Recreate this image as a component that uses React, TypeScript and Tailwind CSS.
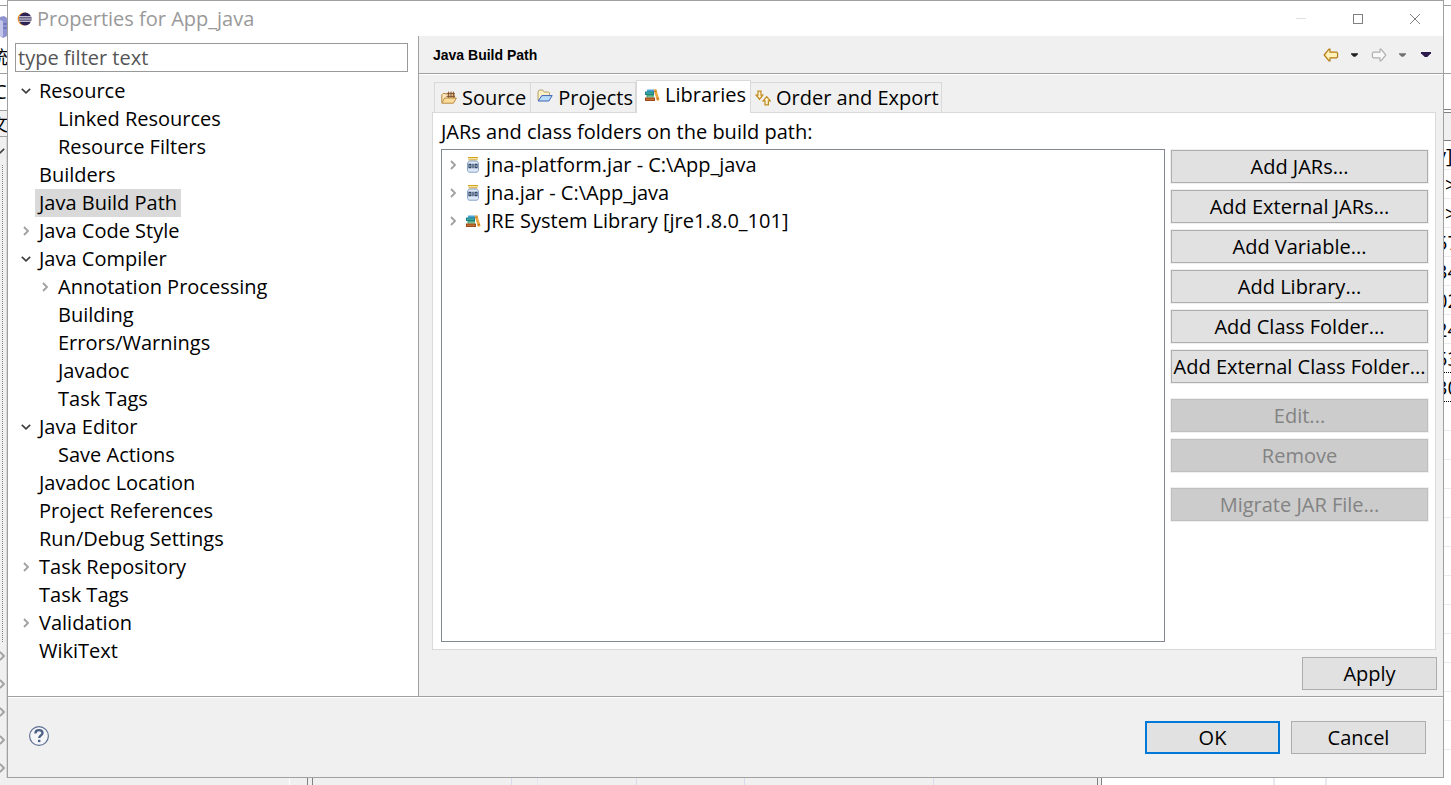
import { useState, type ReactNode } from "react";
import clsx from "clsx";

type TreeNode = { label: string; depth: 0 | 1; state?: "open" | "closed" };

const TREE: TreeNode[] = [
  { label: "Resource", depth: 0, state: "open" },
  { label: "Linked Resources", depth: 1 },
  { label: "Resource Filters", depth: 1 },
  { label: "Builders", depth: 0 },
  { label: "Java Build Path", depth: 0 },
  { label: "Java Code Style", depth: 0, state: "closed" },
  { label: "Java Compiler", depth: 0, state: "open" },
  { label: "Annotation Processing", depth: 1, state: "closed" },
  { label: "Building", depth: 1 },
  { label: "Errors/Warnings", depth: 1 },
  { label: "Javadoc", depth: 1 },
  { label: "Task Tags", depth: 1 },
  { label: "Java Editor", depth: 0, state: "open" },
  { label: "Save Actions", depth: 1 },
  { label: "Javadoc Location", depth: 0 },
  { label: "Project References", depth: 0 },
  { label: "Run/Debug Settings", depth: 0 },
  { label: "Task Repository", depth: 0, state: "closed" },
  { label: "Task Tags", depth: 0 },
  { label: "Validation", depth: 0, state: "closed" },
  { label: "WikiText", depth: 0 },
];

function Chevron({ state }: { state?: "open" | "closed" }) {
  return (
    <svg viewBox="0 0 12 12" className="h-3 w-3 shrink-0" fill="none" aria-hidden="true">
      {state === "open" && <path d="M1.8 3.8 6 7.8l4.2-4" stroke="#404040" strokeWidth="1.7" />}
      {state === "closed" && <path d="m4 2 4 4-4 4" stroke="#a0a0a0" strokeWidth="1.8" />}
    </svg>
  );
}

function EclipseIcon() {
  return (
    <svg viewBox="0 0 16 16" className="h-4 w-4 shrink-0" aria-hidden="true">
      <circle cx="7" cy="8" r="6.4" fill="#f7941e" />
      <circle cx="8.2" cy="8" r="6.4" fill="#2c2255" />
      <path d="M2 5.8h12.4M1.8 8h12.8M2 10.2h12.4" stroke="#fff" strokeWidth="1" />
    </svg>
  );
}

function BooksIcon() {
  return (
    <svg viewBox="0 0 16 16" className="h-4 w-4 shrink-0" aria-hidden="true">
      <path d="M3 2.5h7V5H3z" fill="#4aa3d8" />
      <path d="M1 4.5h9V8H1z" fill="#1f7f86" />
      <path d="M2 5.6h7v1H2z" fill="#4fc0b0" />
      <path d="M2.5 8H10v2.5H2.5z" fill="#3a9a6b" />
      <path d="M3.5 8.7H10v1H3.5z" fill="#8fd0a0" />
      <path d="M1 10.5h10V14H1z" fill="#9c4a1c" />
      <path d="M2 11.7h8v1.1H2z" fill="#d07b3a" />
      <path d="m9.6 2.8 2.6-.9 3.4 11.2-2.6.9z" fill="#eda640" />
      <path d="m10.4 4.6 2.2-.7M12.6 12l2.3-.7" stroke="#b96a14" strokeWidth="1" />
    </svg>
  );
}

function SourceIcon() {
  return (
    <svg viewBox="0 0 16 16" className="h-4 w-4 shrink-0" aria-hidden="true">
      <path d="M.8 12.5V4.8L2 3.5h3l1 1.2h7.5v4" fill="#f9e6bd" stroke="#b98a45" />
      <path d="M6.2 2.2h7v5.6h-7z" fill="#f3d3a5" />
      <path d="M5.5 3.6h8.4M5.5 6.4h8.4M7.6 1.6v6.4M10 1.6v6.4M12.4 1.6v6.4" stroke="#75492a" strokeWidth=".9" />
      <path d="M.8 13.2 3.6 8h11.8l-3 5.2z" fill="#fbdc98" stroke="#b98a45" />
    </svg>
  );
}

function ProjectsIcon() {
  return (
    <svg viewBox="0 0 16 16" className="mb-1 h-4 w-4 shrink-0" aria-hidden="true">
      <path d="M1 12.2V4l1.3-2h3.4l1.4 2h4.6l.8 1v3" fill="#fbefc4" stroke="#b4a06a" />
      <path d="M1.2 13 4.8 7.6h10.4L11.8 13z" fill="#b9dcf8" stroke="#3d62b8" />
    </svg>
  );
}

function OrderIcon() {
  return (
    <svg viewBox="0 0 16 16" className="h-4 w-4 shrink-0" fill="#fdf3cf" stroke="#c08a1e" strokeWidth="1.2" aria-hidden="true">
      <path d="M3 1.2h3v4h1.8L4.5 9.2 1.2 5.2H3z" />
      <path d="M10 14.8h3.4v-4h1.9l-3.6-4.2-3.6 4.2H10z" />
    </svg>
  );
}

function JarIcon() {
  return (
    <svg viewBox="0 0 16 16" className="h-4 w-4 shrink-0" aria-hidden="true">
      <path d="M3 0h10v1.4H3z" fill="#d6a520" />
      <path d="M3.5 1.4h9v1h-9z" fill="#f6e6a4" />
      <path d="M3.5 2.4h9v1h-9z" fill="#cf9c1c" />
      <path d="M4.2 4h7.6l1.7 2v7.6l-1.2 1.6H3.7l-1.2-1.6V6z" fill="#dce7f5" stroke="#8aa5ca" />
      <path d="M4 7.3h1.9v3.4H4zM10.1 7.3H12v3.4h-1.9z" fill="#f5f8fd" stroke="#1f3558" strokeWidth="1.1" />
      <path d="M8 6.8v4.4" stroke="#1f3558" strokeWidth="1.2" />
    </svg>
  );
}

function DownCaret({ className }: { className: string }) {
  return (
    <svg viewBox="0 0 8 4" className={clsx("shrink-0", className)} fill="currentColor" aria-hidden="true">
      <path d="M0 0h8v1L5 4H3L0 1z" />
    </svg>
  );
}

function ArrowIcon({ forward = false }: { forward?: boolean }) {
  return (
    <svg
      viewBox="0 0 16 14"
      className={clsx("h-3.5 w-4 shrink-0", forward && "-scale-x-100")}
      fill={forward ? "#f8f8f8" : "#fff1b8"}
      stroke={forward ? "#b0b0b0" : "#b57a14"}
      strokeWidth="1.2"
      strokeLinejoin="round"
      aria-hidden="true"
    >
      <path d="M1.2 7 6 1.2h1v3h6.6l1 1v3.6l-1 1H7v3H6z" />
    </svg>
  );
}

function PushButton({ children, disabled, primary, className }: { children: ReactNode; disabled?: boolean; primary?: boolean; className?: string }) {
  return (
    <button
      type="button"
      disabled={disabled}
      className={clsx(
        "flex h-[33px] items-center justify-center whitespace-nowrap leading-none shadow-[0_0_0_1px_#f0f0f0]",
        disabled && "border border-[#bfbfbf] bg-[#cccccc] text-[#838383]",
        primary && "border-2 border-[#0078d7] bg-[#e1e1e1]",
        !disabled && !primary && "border border-[#adadad] bg-[#e1e1e1]",
        className,
      )}
    >
      {children}
    </button>
  );
}

const TABS = [
  { label: "Source", icon: <SourceIcon />, padding: "pl-1.5 pr-1" },
  { label: "Projects", icon: <ProjectsIcon />, padding: "pl-1.5 pr-0.5" },
  { label: "Libraries", icon: <BooksIcon />, padding: "pl-[7px] pr-1" },
  { label: "Order and Export", icon: <OrderIcon />, padding: "pl-1 pr-0.5" },
];

const LIBRARIES = [
  { label: "jna-platform.jar - C:\\App_java", icon: <JarIcon /> },
  { label: "jna.jar - C:\\App_java", icon: <JarIcon /> },
  { label: "JRE System Library [jre1.8.0_101]", icon: <BooksIcon /> },
];

const GRID_ROWS = ["y]", ">", ">", "57", "34", "02", "24", "53", "30", "", "", "", "", "", "", "", "", "", "", "", ""];

function LeftBackground() {
  return (
    <div className="flex w-[7px] shrink-0 flex-col overflow-hidden bg-white">
      <div className="h-1.5 border-b border-[#a0a0a0]" />
      <div className="flex h-[68px] flex-col justify-between border-b border-[#a0a0a0] pt-2.5">
        <svg viewBox="0 0 7 22" className="h-[22px] w-[7px]" aria-hidden="true">
          <path d="M0 1 4 0l3 2v18l-4 2-3-2z" fill="#8f93cf" />
          <path d="M0 4 3 5v16l-3-1z" fill="#c3c6ea" />
          <path d="M3 8h4M3 12h4" stroke="#5b60a8" />
        </svg>
        <span className="-ml-2.5 flex h-8 items-center text-lg">统</span>
      </div>
      <div className="flex h-[37px] items-center border-b border-[#a0a0a0]">
        <span className="-ml-1.5">C</span>
      </div>
      <div className="flex h-[26px] items-center border-b border-[#a0a0a0] bg-[#f0f0f0]">
        <span className="-ml-2.5 text-lg">文</span>
      </div>
      <div className="flex flex-1 flex-col border-r border-[#d8d8d8] bg-[#f0f0f0]">
        <div className="-ml-1.5 flex h-7 w-3 items-center">
          <Chevron state="open" />
        </div>
        <div className="ml-0.5 flex-1 border-l border-dotted border-[#808080]" />
        <div className="-mb-1">
          {[0, 1, 2, 3, 4].map((n) => (
            <div key={n} className="-ml-1 flex h-7 w-3 items-center">
              <Chevron state="closed" />
            </div>
          ))}
        </div>
      </div>
    </div>
  );
}

function RightBackground() {
  return (
    <div className="flex w-[7px] shrink-0 flex-col overflow-hidden bg-white">
      <div className="h-1.5 border-b border-[#a0a0a0]" />
      <div className="h-[68px] border-b border-[#a0a0a0]" />
      <div className="h-9 border-b border-[#808080]" />
      <div className="mt-0.5 h-[29px] shrink-0 border-y border-[#808080] bg-[#f0f0f0]" />
      <div className="flex-1">
        {GRID_ROWS.map((text, i) => (
          <div
            key={i}
            className={clsx(
              "flex h-[29px] items-center border-b pt-0.5",
              i === 7 || i === 8 ? "border-dotted border-black" : "border-[#ececec]",
            )}
          >
            <span className={text.length > 1 ? "-ml-2" : "ml-px"}>{text}</span>
          </div>
        ))}
      </div>
    </div>
  );
}

function BottomBackground() {
  return (
    <div className="flex h-[7px] shrink-0 bg-[#f0f0f0]">
      <div className="w-[290px] border-r border-white" />
      <div className="w-[18px] border-r border-[#808080]" />
      <div className="w-[5px] border-r border-[#808080]" />
      <div className="w-[199px] border-r border-[#d9dcee]" />
      <div className="w-[26px] border-r border-[#e3e5f0]" />
      <div className="w-[99px] border-r border-[#d9dcee]" />
      <div className="w-[108px] border-r border-[#d9dcee]" />
      <div className="w-[189px] border-r border-[#d9dcee]" />
      <div className="flex-1" />
      <div className="w-[5px] border-x border-[#808080]" />
      <div className="w-[173px] border-r-2 border-[#e8e9f2] bg-white" />
      <div className="w-[52px] border-r-2 border-[#e8e9f2] bg-white" />
      <div className="w-[124px] bg-white" />
    </div>
  );
}

function TitleBar() {
  return (
    <header className="flex h-[35px] shrink-0 items-center bg-white pl-[9px]">
      <EclipseIcon />
      <h1 className="ml-1 flex-1 text-[#999999]">Properties for App_java</h1>
      <button type="button" aria-label="Minimize" className="flex h-full w-14 items-center justify-center">
        <span className="h-px w-2.5 bg-[#e0e0e0]" />
      </button>
      <button type="button" aria-label="Maximize" className="flex h-full w-[58px] items-center justify-center">
        <span className="h-2.5 w-2.5 border border-[#808080]" />
      </button>
      <button type="button" aria-label="Close" className="flex h-full w-14 items-center justify-center">
        <svg viewBox="0 0 10 10" className="h-2.5 w-2.5" stroke="#808080" aria-hidden="true">
          <path d="m0 0 10 10M10 0 0 10" />
        </svg>
      </button>
    </header>
  );
}

function Sidebar() {
  const [selected, setSelected] = useState("Java Build Path");
  return (
    <nav aria-label="Property pages" className="w-[411px] shrink-0 border-r border-[#a0a0a0] bg-white">
      <div className="pt-[7px] pr-2.5 pl-[7px]">
        <input
          type="text"
          aria-label="Filter"
          placeholder="type filter text"
          className="block h-[29px] w-full border border-[#999999] bg-white px-0.5 leading-none text-black outline-none placeholder:text-[#555555] placeholder:opacity-100"
        />
      </div>
      <ul role="tree" className="pt-[5px]">
        {TREE.map((node, i) => (
          <li
            key={i}
            role="treeitem"
            aria-selected={node.label === selected}
            aria-expanded={node.state ? node.state === "open" : undefined}
            className={clsx("flex h-7 items-center", node.depth === 1 ? "pl-[31px]" : "pl-3")}
          >
            <Chevron state={node.state} />
            <button
              type="button"
              onClick={() => setSelected(node.label)}
              className={clsx(
                "ml-[3px] flex h-7 items-center px-1 whitespace-nowrap",
                node.label === selected && "bg-[#d9d9d9]",
              )}
            >
              {node.label}
            </button>
          </li>
        ))}
      </ul>
    </nav>
  );
}

function PageHeader() {
  return (
    <div className="flex h-[38px] shrink-0 items-center border-b border-[#a0a0a0] pr-3 pl-3.5">
      <h2 className="flex-1 font-['Liberation_Sans',sans-serif] text-sm font-bold">Java Build Path</h2>
      <div className="flex items-center">
        <button type="button" aria-label="Back"><ArrowIcon /></button>
        <button type="button" aria-label="Back history" className="ml-3 text-[#202020]"><DownCaret className="h-1 w-[7px]" /></button>
        <button type="button" aria-label="Forward" className="ml-[13px]"><ArrowIcon forward /></button>
        <button type="button" aria-label="Forward history" className="ml-3 text-[#707070]"><DownCaret className="h-1 w-[7px]" /></button>
        <button type="button" aria-label="Menu" className="ml-[15px] text-[#2b1a4a]"><DownCaret className="h-[5px] w-2.5" /></button>
      </div>
    </div>
  );
}

function BuildPathPage() {
  const [active, setActive] = useState("Libraries");
  return (
    <main className="flex min-w-0 flex-1 flex-col">
      <PageHeader />
      <div className="flex flex-1 flex-col border-t border-white pt-[5px] pr-1.5 pb-1.5 pl-[13px]">
        <div role="tablist" className="z-10 flex h-8 items-end pl-0.5">
          {TABS.map((tab) => (
            <button
              key={tab.label}
              type="button"
              role="tab"
              aria-selected={tab.label === active}
              onClick={() => setActive(tab.label)}
              className={clsx(
                "flex items-center gap-[5px] border-[#d9d9d9] whitespace-nowrap",
                tab.padding,
                tab.label === active
                  ? "-mb-px h-[33px] border-x border-t bg-white pb-1"
                  : "h-[30px] border-t border-r bg-[#f0f0f0] first:border-l",
              )}
            >
              {tab.icon}
              {tab.label}
            </button>
          ))}
        </div>
        <div role="tabpanel" className="mr-px flex flex-1 flex-col border border-[#d9d9d9] bg-white pr-[7px] pb-[7px] pl-2">
          <h3 className="flex h-9 items-center pt-0.5">JARs and class folders on the build path:</h3>
          <div className="flex flex-1 gap-1.5">
            <ul role="tree" aria-label="Build path entries" className="min-w-0 flex-1 border border-[#828790] pt-px">
              {LIBRARIES.map((lib) => (
                <li key={lib.label} role="treeitem" aria-selected={false} className="flex h-7 items-center pl-[5px]">
                  <Chevron state="closed" />
                  <span className="ml-1.5 flex items-center gap-[5px] whitespace-nowrap">
                    {lib.icon}
                    {lib.label}
                  </span>
                </li>
              ))}
            </ul>
            <div className="flex w-[257px] shrink-0 flex-col gap-4 pt-px">
              <div className="flex flex-col gap-[7px]">
                <PushButton>Add JARs...</PushButton>
                <PushButton>Add External JARs...</PushButton>
                <PushButton>Add Variable...</PushButton>
                <PushButton>Add Library...</PushButton>
                <PushButton>Add Class Folder...</PushButton>
                <PushButton>Add External Class Folder...</PushButton>
              </div>
              <div className="flex flex-col gap-[7px]">
                <PushButton disabled>Edit...</PushButton>
                <PushButton disabled>Remove</PushButton>
              </div>
              <PushButton disabled>Migrate JAR File...</PushButton>
            </div>
          </div>
        </div>
        <div className="mt-[7px] flex justify-end">
          <PushButton className="w-[135px]">Apply</PushButton>
        </div>
      </div>
    </main>
  );
}

function Footer() {
  return (
    <footer className="border-t border-[#a0a0a0]">
      <div className="flex h-20 items-center gap-[11px] border-t border-white pr-[17px] pl-5">
        <button type="button" aria-label="Help" className="mr-auto mb-1">
          <svg viewBox="0 0 22 22" className="h-[22px] w-[22px]" aria-hidden="true">
            <circle cx="11" cy="11" r="9.4" fill="#f4f6fa" stroke="#5f7193" strokeWidth="1.2" />
            <path
              d="M7.4 8.4c0-2 1.5-3.2 3.6-3.2s3.5 1.1 3.5 2.8c0 2.3-3.3 2.6-3.3 5.1"
              fill="none"
              stroke="#4c5f85"
              strokeWidth="2.3"
            />
            <path d="M10 14.8h2.4v2.3H10z" fill="#4c5f85" />
          </svg>
        </button>
        <PushButton primary className="w-[135px]">OK</PushButton>
        <PushButton className="w-[135px]">Cancel</PushButton>
      </div>
    </footer>
  );
}

export default function App() {
  return (
    <div className="flex min-h-screen flex-col bg-white font-['Open_Sans','Noto_Sans_CJK_SC',sans-serif] text-xl leading-7 text-black">
      <div className="flex flex-1">
        <LeftBackground />
        <div role="dialog" aria-label="Properties for App_java" className="flex min-w-0 flex-1 flex-col border border-[#a0a0a0] bg-[#f0f0f0]">
          <TitleBar />
          <div className="flex flex-1">
            <Sidebar />
            <BuildPathPage />
          </div>
          <Footer />
        </div>
        <RightBackground />
      </div>
      <BottomBackground />
    </div>
  );
}
